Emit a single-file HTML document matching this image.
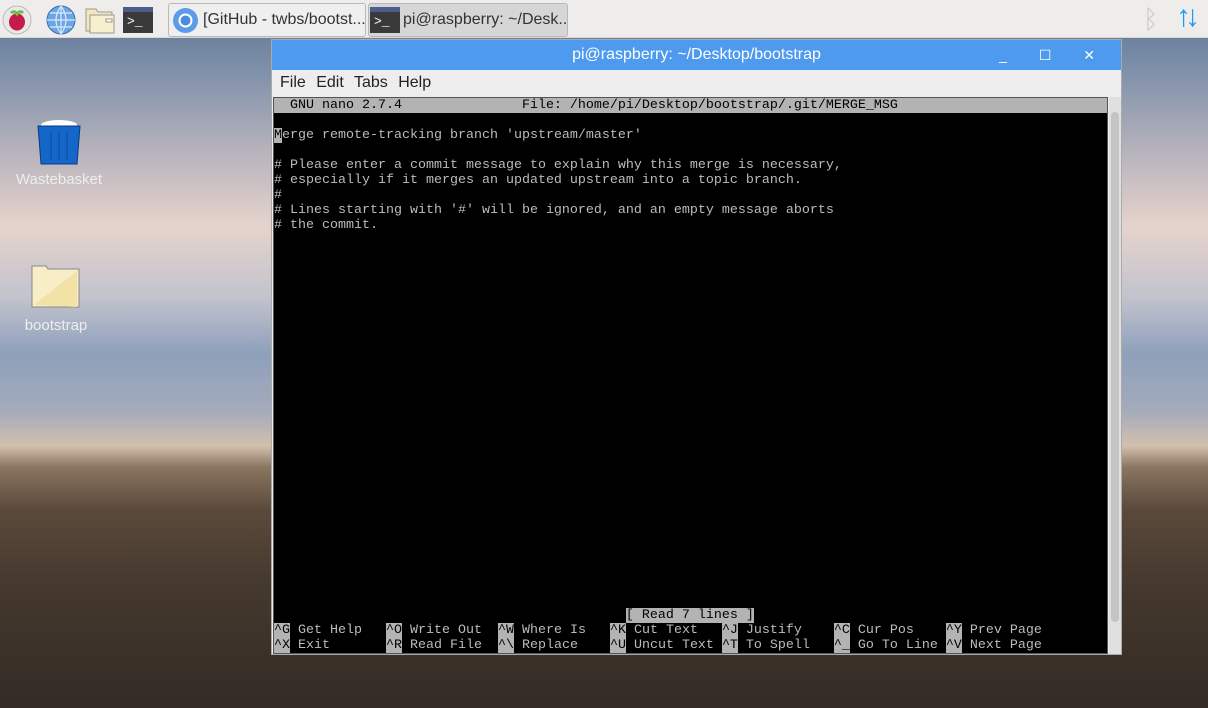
<!DOCTYPE html>
<html><head><meta charset="utf-8"><style>
*{margin:0;padding:0;box-sizing:border-box}
body{width:1208px;height:708px;overflow:hidden;position:relative;font-family:"Liberation Sans",sans-serif;
background:linear-gradient(180deg,#5a7290 0%,#7f90aa 10%,#b9b5bd 22%,#e6d3cc 32%,#c2c3cd 42%,#8ea0bb 50%,#a4abbb 58%,#d2c0ad 63%,#8a7560 66%,#5b4a3b 72%,#46392e 82%,#332b25 100%)}
.bar{position:absolute;left:0;top:0;width:1208px;height:38px;background:#eeedec;border-bottom:1px solid #d6d6d6}
.tb{position:absolute;top:3px;height:34px;border:1px solid #b8b8b8;border-radius:3px;background:#efefef;font-size:16px;color:#333;line-height:32px;overflow:hidden;white-space:nowrap}
.term-ic{position:absolute;width:30px;height:26px;background:#3a3a3a;border-top:5px solid #4d5c8a;color:#fff;font:13px "Liberation Mono",monospace;line-height:20px;padding-left:4px}
.win{position:absolute;left:271px;top:39px;width:851px;height:616px;background:#ededed;border:1px solid #aaa}
.title{height:30px;background:#4d9aee;color:#fff;text-align:center;font-size:16px;line-height:30px}
.menu{height:26px;font-size:16px;line-height:26px;color:#222;padding-left:8px;word-spacing:6px}
.scr{position:absolute;left:1px;top:57px;width:835px;height:557px;background:#000;border:1px solid #555;overflow:hidden}
pre{font:13.33px/15px "Liberation Mono",monospace;color:#bbb;margin:0;position:absolute;left:0;white-space:pre}
.h{background:#b3b3b3;color:#000}
.sb{position:absolute;left:837px;top:57px;width:12px;height:557px;background:#e0e0e0}
.ic{position:absolute;color:#eee;font-size:15px;text-align:center;width:100px}
</style></head><body>
<div class="bar">
 <svg style="position:absolute;left:2px;top:5px" width="30" height="30"><circle cx="15" cy="15" r="14" fill="#e8e8e8" stroke="#bbb"/><ellipse cx="15" cy="17" rx="8" ry="8.5" fill="#c51a4a"/><path d="M9 8 Q12 5 15 9 Q18 5 21 8" stroke="#6cc04a" stroke-width="3" fill="none"/></svg>
 <svg style="position:absolute;left:45px;top:4px" width="32" height="32"><circle cx="16" cy="16" r="14" fill="#6aa6e6" stroke="#3d6fb0"/><path d="M2 16H30M16 2V30M5 9H27M5 23H27M16 2Q6 16 16 30M16 2Q26 16 16 30" stroke="#dde9f7" stroke-width="1.2" fill="none"/></svg>
 <svg style="position:absolute;left:84px;top:5px" width="32" height="30"><path d="M2 4H12L14 7H28V26H2Z" fill="#f1e6bd" stroke="#999"/><path d="M6 10H30V28H6Z" fill="#f8efcc" stroke="#999"/><rect x="22" y="14" width="6" height="3" fill="#fff" stroke="#999"/></svg>
 <div class="term-ic" style="left:123px;top:7px">&gt;_</div>
 <div class="tb" style="left:168px;width:198px;padding-left:34px">
  <svg style="position:absolute;left:3px;top:3px" width="27" height="27"><circle cx="13.5" cy="13.5" r="12.5" fill="#5b9be8"/><circle cx="13.5" cy="13.5" r="7" fill="#fff"/><circle cx="13.5" cy="13.5" r="5" fill="#4a8ae0"/></svg>[GitHub - twbs/bootst...</div>
 <div class="tb" style="left:368px;width:200px;padding-left:34px;background:#d6d6d6">
  <div class="term-ic" style="left:1px;top:3px">&gt;_</div>pi@raspberry: ~/Desk...</div>
 <div style="position:absolute;left:1143px;top:4px;font-size:26px;color:#c8c8c8">&#x16D2;</div>
 <div style="position:absolute;left:1176px;top:0px;font-size:30px;color:#1a9cf0;font-weight:bold;letter-spacing:-6px">↑↓</div>
</div>
<svg style="position:absolute;left:36px;top:117px" width="46" height="48"><ellipse cx="23" cy="8" rx="18" ry="5" fill="#fff"/><path d="M2 9H44L41 47H5Z" fill="#1466c8" stroke="#0a3c80"/><path d="M15 14V43M23 14V43M31 14V43" stroke="#0c4c9c"/></svg>
<div class="ic" style="left:9px;top:171px">Wastebasket</div>
<svg style="position:absolute;left:31px;top:265px" width="50" height="44"><path d="M1 1H15L17 4H48V42H1Z" fill="#f7eec8" stroke="#888"/><path d="M3 40L46 6V42Z" fill="#f2e2a6"/></svg>
<div class="ic" style="left:6px;top:317px">bootstrap</div>
<div class="win">
 <div class="title">pi@raspberry: ~/Desktop/bootstrap<span style="position:absolute;right:12px;top:0;font-size:14px;letter-spacing:14px">_ ☐ ✕</span></div>
 <div class="menu">File Edit Tabs Help</div>
 <div class="scr">
<div style="position:absolute;left:0;top:0;width:833px;height:15px;background:#b3b3b3"></div>
<pre style="top:0;color:#000">  GNU nano 2.7.4               File: /home/pi/Desktop/bootstrap/.git/MERGE_MSG</pre>
<pre style="top:30px"><span class="h">M</span>erge remote-tracking branch 'upstream/master'

# Please enter a commit message to explain why this merge is necessary,
# especially if it merges an updated upstream into a topic branch.
#
# Lines starting with '#' will be ignored, and an empty message aborts
# the commit.</pre>
<pre style="top:510px">                                            <span class="h">[ Read 7 lines ]</span>
<span class="h">^G</span> Get Help   <span class="h">^O</span> Write Out  <span class="h">^W</span> Where Is   <span class="h">^K</span> Cut Text   <span class="h">^J</span> Justify    <span class="h">^C</span> Cur Pos    <span class="h">^Y</span> Prev Page
<span class="h">^X</span> Exit       <span class="h">^R</span> Read File  <span class="h">^\</span> Replace    <span class="h">^U</span> Uncut Text <span class="h">^T</span> To Spell   <span class="h">^_</span> Go To Line <span class="h">^V</span> Next Page</pre></div>
 <div class="sb"><div style="margin:15px 2px;height:510px;background:#c4c4c4;border-radius:4px"></div></div>
</div>
</body></html>
